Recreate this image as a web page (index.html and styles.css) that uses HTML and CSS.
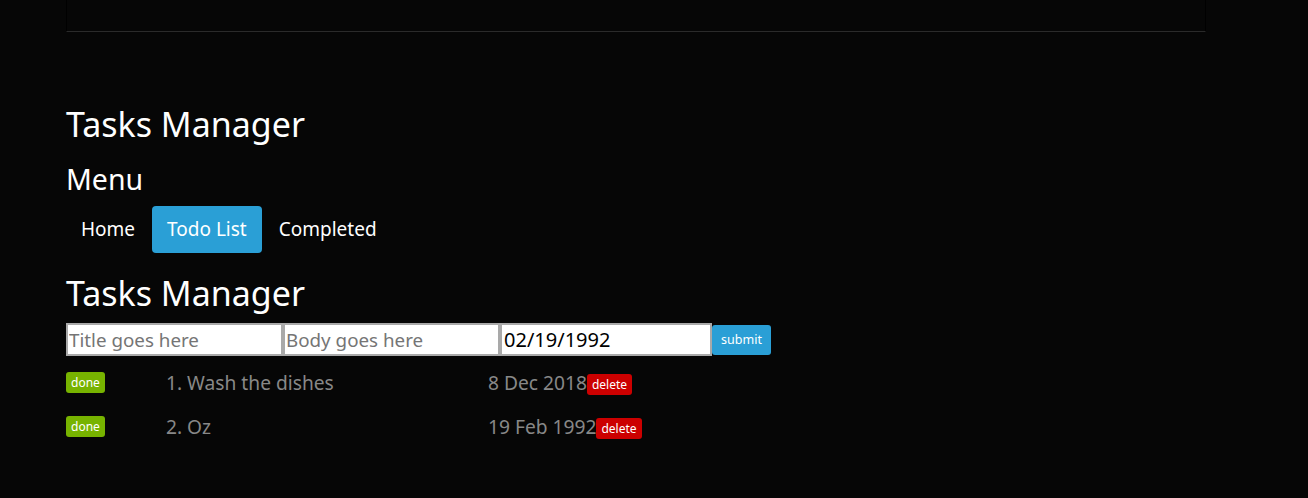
FILE: index.html
```html
<!DOCTYPE html>
<html>
<head>
<meta charset="utf-8">
<link rel="stylesheet" href="styles.css">
</head>
<body>
<div class="page">
  <div class="topbar"></div>
  <h1 class="title first">Tasks Manager</h1>
  <h2 class="subtitle">Menu</h2>
  <nav class="pills">
    <a class="pill">Home</a>
    <a class="pill active">Todo List</a>
    <a class="pill">Completed</a>
  </nav>
  <h1 class="title second">Tasks Manager</h1>
  <form class="task-form">
    <input class="field title-field" type="text" placeholder="Title goes here">
    <input class="field body-field" type="text" placeholder="Body goes here">
    <input class="field date-field" type="text" value="02/19/1992">
    <button class="btn-submit" type="button">submit</button>
  </form>
  <div class="tasks">
    <div class="task">
      <span class="badge done">done</span>
      <span class="task-name">1. Wash the dishes</span>
      <span class="task-date">8 Dec 2018<span class="badge del">delete</span></span>
    </div>
    <div class="task">
      <span class="badge done">done</span>
      <span class="task-name">2. Oz</span>
      <span class="task-date">19 Feb 1992<span class="badge del">delete</span></span>
    </div>
  </div>
</div>
</body>
</html>
```
FILE: styles.css
```css
html, body {
  margin: 0;
  padding: 0;
  background: #060606;
  font-family: "Noto Sans", "Open Sans", sans-serif;
  color: #fff;
}
.page {
  margin-left: 66px;
  width: 1140px;
}
.topbar {
  height: 31px;
  border-left: 1px solid #000;
  border-right: 1px solid #000;
  border-bottom: 1px solid #2a2a2a;
}
.title {
  font-size: 34px;
  font-weight: normal;
  line-height: 40px;
  margin: 0;
}
.title.first { margin-top: 72px; }
.subtitle {
  font-size: 28.5px;
  font-weight: normal;
  line-height: 34px;
  margin: 18px 0 10px;
}
.pills {
  display: flex;
  gap: 2px;
}
.pill {
  font-size: 19px;
  line-height: 27px;
  padding: 10px 15px;
  border-radius: 4px;
  color: #fff;
}
.pill.active { background: #2a9fd6; }
.title.second { margin-top: 20px; }
.task-form {
  display: flex;
  align-items: center;
  margin-top: 10px;
}
.field {
  box-sizing: border-box;
  height: 33px;
  border: 2px solid #a9a9a9;
  background: #fff;
  font-family: "Noto Sans", sans-serif;
  font-size: 18.8px;
  padding: 0 1px;
  color: #000;
  margin: 0;
}
.field::placeholder { color: #757575; }
.title-field, .body-field { width: 217px; }
.date-field { width: 212px; font-size: 20px; padding: 0 2px; }
.btn-submit {
  height: 30px;
  width: 59px;
  background: #2a9fd6;
  color: #fff;
  border: none;
  border-radius: 3px;
  font-family: "Noto Sans", sans-serif;
  font-size: 12.5px;
  padding: 0;
}
.tasks { margin-top: 4px; }
.task {
  display: grid;
  grid-template-columns: 100px 322px auto;
  align-items: center;
  height: 44px;
}
.badge {
  display: inline-block;
  font-size: 12px;
  line-height: 21px;
  height: 21px;
  padding: 0 5px;
  border-radius: 3px;
  color: #fff;
  justify-self: start;
}
.badge.done { background: #77b300; }
.badge.del { background: #c00; vertical-align: 1px; }
.task-name, .task-date {
  font-size: 19.2px;
  color: #888;
}
```
